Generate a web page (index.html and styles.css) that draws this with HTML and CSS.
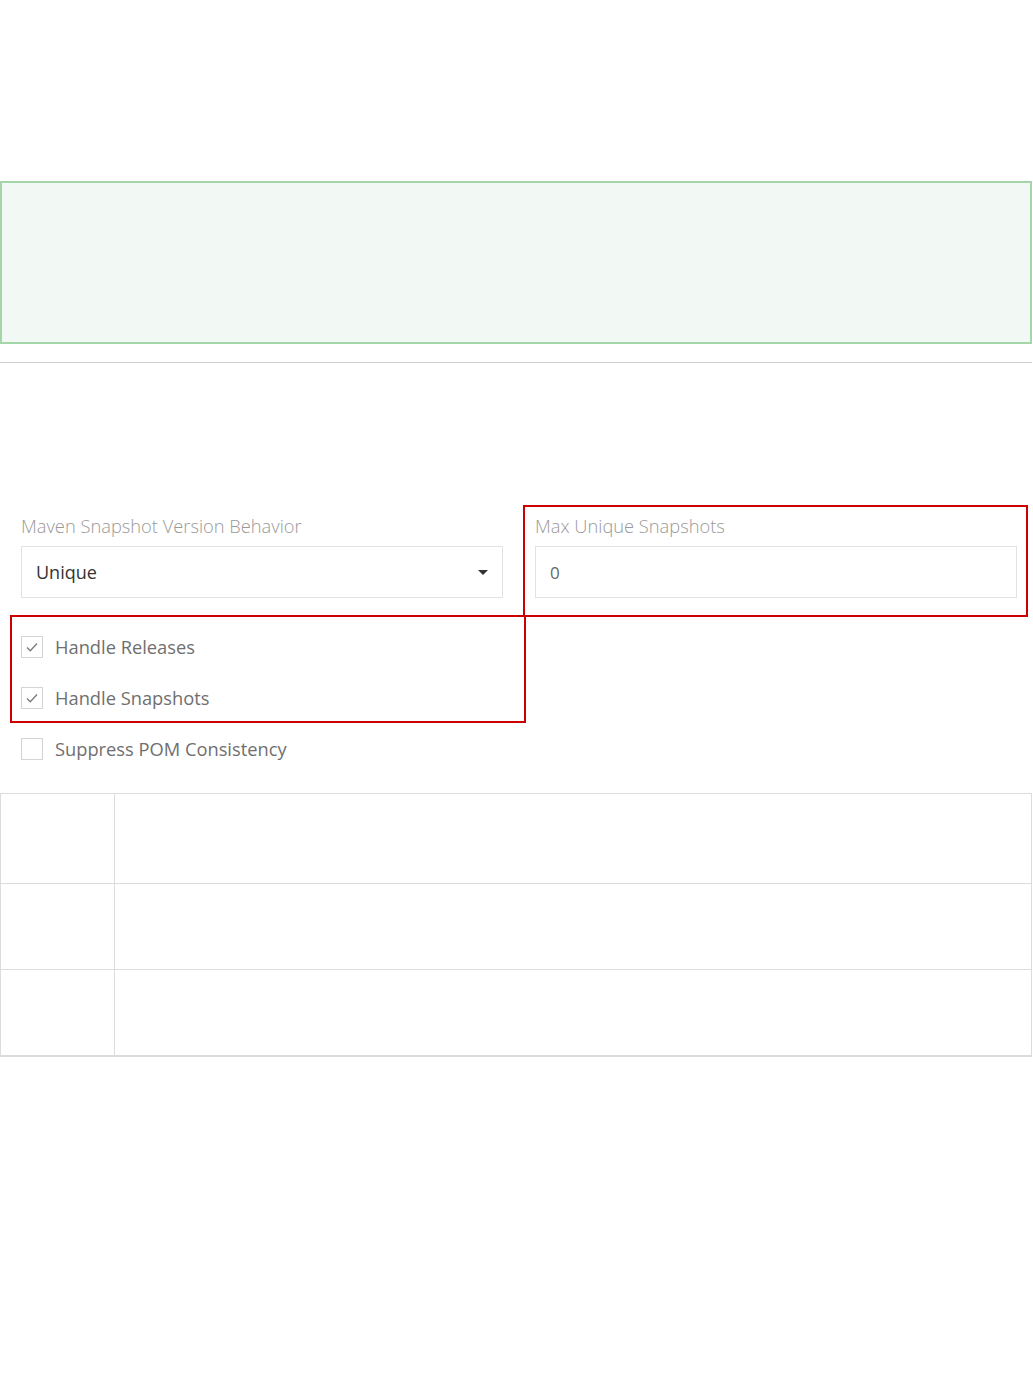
FILE: index.html
```html
<!DOCTYPE html>
<html>
<head>
<meta charset="utf-8">
<link rel="stylesheet" href="styles.css">
</head>
<body>
<div class="page">
  <div class="alert"></div>
  <div class="rule"></div>
  <div class="form">
    <div class="grid">
      <div class="field">
        <div class="label">Maven Snapshot Version Behavior</div>
        <div class="select">
          <span class="value">Unique</span>
          <span class="caret"></span>
        </div>
      </div>
      <div class="field">
        <div class="label">Max Unique Snapshots</div>
        <div class="input"><span class="value light">0</span></div>
      </div>
    </div>
    <div class="checks">
      <div class="check">
        <span class="box"><svg width="22" height="22" viewBox="0 0 22 22"><path d="M6 11.5 L9.3 14.8 L16 7.5" fill="none" stroke="#7a7a7a" stroke-width="1.3"/></svg></span>
        <span class="ctext">Handle Releases</span>
      </div>
      <div class="check">
        <span class="box"><svg width="22" height="22" viewBox="0 0 22 22"><path d="M6 11.5 L9.3 14.8 L16 7.5" fill="none" stroke="#7a7a7a" stroke-width="1.3"/></svg></span>
        <span class="ctext">Handle Snapshots</span>
      </div>
      <div class="check">
        <span class="box"></span>
        <span class="ctext">Suppress POM Consistency</span>
      </div>
    </div>
  </div>
  <div class="table">
    <div class="row first"><div class="c1"></div><div class="c2"></div></div>
    <div class="row"><div class="c1"></div><div class="c2"></div></div>
    <div class="row"><div class="c1"></div><div class="c2"></div></div>
  </div>
  <div class="mark mark-a"></div>
  <div class="mark mark-b"></div>
</div>
</body>
</html>
```

FILE: styles.css
```css
html, body {
  margin: 0;
  padding: 0;
  background: #ffffff;
}
body {
  font-family: "Open Sans", "Liberation Sans", sans-serif;
}
.page {
  position: relative;
  width: 1033px;
  min-height: 1392px;
  padding-top: 181px;
  box-sizing: border-box;
}
.alert {
  width: 1032px;
  height: 163px;
  box-sizing: border-box;
  border: 2px solid #a4d6aa;
  background: #f2f8f4;
}
.rule {
  width: 1032px;
  height: 1px;
  background: #cfcfcf;
  margin-top: 18px;
}
.form {
  padding: 151px 0 0 21px;
}
.grid {
  display: grid;
  grid-template-columns: 482px 482px;
  column-gap: 32px;
}
.label {
  font-size: 18.3px;
  font-weight: 300;
  color: #999999;
  line-height: 24px;
  height: 24px;
  margin-bottom: 8px;
  white-space: nowrap;
}
.select, .input {
  height: 52px;
  box-sizing: border-box;
  border: 1px solid #e3e3e3;
  display: flex;
  align-items: center;
  padding: 0 14px;
  background: #fff;
}
.select {
  justify-content: space-between;
}
.value {
  font-size: 18px;
  color: #333;
}
.value.light {
  color: #666;
  font-size: 17px;
}
.caret {
  width: 0;
  height: 0;
  border-left: 5px solid transparent;
  border-right: 5px solid transparent;
  border-top: 5px solid #333;
}
.checks {
  margin-top: 23px;
  display: flex;
  flex-direction: column;
}
.check {
  height: 51px;
  display: flex;
  align-items: center;
}
.box {
  width: 22px;
  height: 22px;
  box-sizing: border-box;
  border: 1px solid #d4d4d4;
  display: flex;
  align-items: center;
  justify-content: center;
  background: #fff;
}
.box svg {
  display: block;
  flex: none;
}
.ctext {
  margin-left: 12px;
  font-size: 18.3px;
  color: #6f6f6f;
  white-space: nowrap;
}
.table {
  margin-top: 19px;
  width: 1032px;
  box-sizing: border-box;
  border: 1px solid #dcdcdc;
  border-bottom-width: 2px;
}
.row {
  display: flex;
  height: 86px;
  box-sizing: border-box;
  border-top: 1px solid #dcdcdc;
}
.row.first {
  border-top: none;
  height: 89px;
}
.c1 {
  width: 113px;
  border-right: 1px solid #dcdcdc;
}
.c2 {
  flex: 1;
}
.mark {
  position: absolute;
  border: 2px solid #cc0000;
  box-sizing: border-box;
}
.mark-a {
  left: 523px;
  top: 505px;
  width: 505px;
  height: 112px;
}
.mark-b {
  left: 10px;
  top: 615px;
  width: 516px;
  height: 108px;
}
```
